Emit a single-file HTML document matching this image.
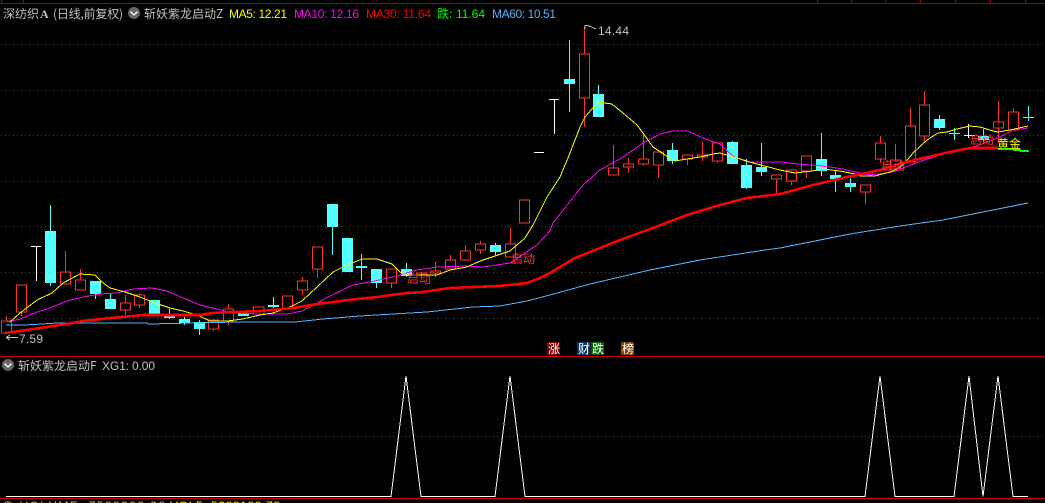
<!DOCTYPE html>
<html><head><meta charset="utf-8">
<style>
html,body{margin:0;padding:0;background:#000;width:1045px;height:503px;overflow:hidden}
svg{display:block}
text{font-family:"Liberation Sans","WenQuanYi Zen Hei","Noto Sans CJK SC",sans-serif;font-size:12px}
.c{font-family:"WenQuanYi Zen Hei","Noto Sans CJK SC",sans-serif}
</style></head><body>
<svg width="1045" height="503" viewBox="0 0 1045 503" xmlns="http://www.w3.org/2000/svg">
<rect width="1045" height="503" fill="#000"/>
<g shape-rendering="crispEdges">
<path d="M0 3.5H1045M1.5 0V3M23.5 0V3M817.5 0V3M851.5 0V3M885.5 0V3M920.5 0V3M955.5 0V3M990.5 0V3M1025.5 0V3" stroke="#a00000" fill="none"/>
<path d="M1 44.5H1045M1 90.5H1045M1 135.5H1045M1 181.5H1045M1 226.5H1045M1 272.5H1045M1 318.5H1045M1 436.5H1045" stroke="#c01414" stroke-dasharray="1 3" fill="none"/>
<path d="M0 356.5H1045M0 498.5H1045" stroke="#c80000" fill="none"/>

<!-- red candles -->
<path fill="none" stroke="#ff3232" d="
M6.5 316V321M1.5 321H11.5V333H1.5Z
M21.5 312V316M16.5 285H26.5V312H16.5Z
M65.5 251V272M60.5 272H70.5V284H60.5Z
M80.5 269V280M75.5 280H85.5V290H75.5Z
M125.5 295V303M125.5 310V315M120.5 303H130.5V310H120.5Z
M139.5 293V295M139.5 305V308M134.5 295H144.5V305H134.5Z
M213.5 329V331M208.5 320H218.5V329H208.5Z
M228.5 304V309M228.5 321V325M223.5 309H233.5V321H223.5Z
M264 307H253.5V314H264Z
M282.5 296H292.5V308H282.5Z
M302.5 277V281M302.5 290V295M297.5 281H307.5V290H297.5Z
M317.5 269V278M312.5 247H322.5V269H312.5Z
M391.5 283V288M386.5 269H396.5V283H386.5Z
M421.5 272V276M416.5 273H426.5V275H416.5Z
M435.5 262V271M435.5 273V277M430.5 271H440.5V273H430.5Z
M450.5 255V260M445.5 260H455.5V269H445.5Z
M465.5 245V251M465.5 260V261M460.5 251H470.5V260H460.5Z
M480.5 241V244M480.5 250V254M475.5 244H485.5V250H475.5Z
M510.5 228V244M505.5 244H515.5V257H505.5Z
M519.5 200H529.5V223H519.5Z
M584.5 27V54M584.5 98V127M579.5 54H589.5V98H579.5Z
M613.5 145V168M608.5 168H618.5V175H608.5Z
M628.5 158V164M628.5 167V173M623.5 164H633.5V167H623.5Z
M643.5 133V159M643.5 164V166M638.5 159H648.5V164H638.5Z
M658.5 165V178M653.5 152H663.5V165H653.5Z
M687.5 159V165M682.5 155H692.5V159H682.5Z
M702.5 142V155M702.5 157V161M697.5 155H707.5V157H697.5Z
M717.5 161V163M712.5 143H722.5V161H712.5Z
M776.5 179V194M771.5 175H781.5V179H771.5Z
M791.5 181V185M786.5 170H796.5V181H786.5Z
M806.5 171V178M801.5 156H811.5V171H801.5Z
M865.5 192V204M860.5 185H870.5V192H860.5Z
M880.5 136V143M880.5 159V163M875.5 143H885.5V159H875.5Z
M895.5 144V160M890.5 160H900.5V169H890.5Z
M910.5 108V126M905.5 126H915.5V162H905.5Z
M924.5 91V105M924.5 136V142M919.5 105H929.5V136H919.5Z
M998.5 101V122M998.5 128V143M993.5 122H1003.5V128H993.5Z
M1013.5 108V112M1008.5 112H1018.5V130H1008.5Z"/>

<!-- cyan candles -->
<path fill="none" stroke="#54ffff" d="M50.5 205V231M50.5 283V286M95.5 294V299M110.5 293V299M169.5 309V316M169.5 318V319M184.5 317V319M184.5 323V325M199.5 320V322M199.5 329V335M243.5 313V316M273.5 297V308M332.5 227V255M361.5 254V280M376.5 283V288M406.5 263V277M495.5 243V245M495.5 252V255M569.5 40V112M598.5 85V94M672.5 143V150M672.5 161V164M732.5 141V142M746.5 159V165M746.5 188V189M761.5 143V167M761.5 172V176M821.5 133V159M821.5 171V176M835.5 170V192M850.5 178V192M939.5 115V130M954.5 128V140M949 133.5H960M983.5 129V143M1028.5 106V121M1023 117.5H1034"/>
<g fill="#54ffff">
<rect x="45" y="231" width="11" height="52"/>
<rect x="90" y="281" width="11" height="13"/>
<rect x="105" y="299" width="11" height="10"/>
<rect x="149" y="300" width="11" height="14"/>
<rect x="164" y="316" width="11" height="2"/>
<rect x="179" y="319" width="11" height="4"/>
<rect x="194" y="322" width="11" height="7"/>
<rect x="238" y="313" width="11" height="3"/>
<rect x="268" y="305" width="11" height="2"/>
<rect x="327" y="204" width="11" height="23"/>
<rect x="342" y="238" width="11" height="34"/>
<rect x="356" y="266" width="11" height="2"/>
<rect x="371" y="269" width="11" height="14"/>
<rect x="401" y="269" width="11" height="7"/>
<rect x="490" y="245" width="11" height="7"/>
<rect x="564" y="79" width="11" height="5"/>
<rect x="593" y="94" width="11" height="23"/>
<rect x="667" y="150" width="11" height="11"/>
<rect x="727" y="142" width="11" height="22"/>
<rect x="741" y="165" width="11" height="23"/>
<rect x="756" y="167" width="11" height="5"/>
<rect x="816" y="159" width="11" height="12"/>
<rect x="830" y="175" width="11" height="4"/>
<rect x="845" y="183" width="11" height="4"/>
<rect x="934" y="119" width="11" height="9"/>
<rect x="978" y="136" width="11" height="4"/>
</g>

<!-- white marks -->
<path fill="none" stroke="#fff" d="M36.500 246V281M31 246.500H41M534 152.500H544M554.500 99V134M549 99.500H559M968.500 124V138M964 135.500H975"/>

<!-- MA60 -->
<polyline fill="none" stroke="#54b4ff" points="6,325 25,325 58,323 147,323 148,324 237,322 295,322 323,319 360,316 393,314 427,312 473,307 500,306 527,301 550,295 590,284 650,270 700,260 765,250 780,248 850,234 900,226 943,220 1028,203"/>
<!-- MA10 -->
<polyline fill="none" stroke="#ff00ff" points="7,322 20,319 37,312 50,308 67,301 83,297 100,294 117,293 133,289 152,288 167,291 183,298 200,305 217,309 233,313 260,314 288,314 302,311 317,303 332,295 353,285 370,282 393,277 417,270 437,267 467,266 483,267 510,263 525,253 537,245 550,231 553,223 583,185 600,170 620,159 643,143 660,134 673,131 688,131 703,138 720,144 733,156 747,162 780,162 798,164 823,166 843,169 860,173 870,175 893,172 903,168 927,159 950,152 967,148 977,146 1000,137 1013,130 1028,128"/>
<!-- MA5 -->
<polyline fill="none" stroke="#ffff00" points="10,322 20,313 37,300 52,293 63,283 80,274 95,275 102,282 110,288 125,292 140,297 155,303 170,308 183,311 197,315 210,321 227,321 243,319 260,315 273,313 290,307 302,301 317,287 333,272 347,265 362,259 377,259 392,264 400,272 407,275 423,275 437,275 450,270 467,267 480,261 495,256 510,251 525,238 533,225 547,197 560,177 570,153 580,127 585,117 598,102 612,104 623,113 637,125 643,133 653,147 665,155 675,161 687,159 700,157 713,154 720,153 737,158 753,163 780,170 795,173 812,171 823,169 840,171 855,174 860,176 875,176 890,172 895,170 903,165 913,153 927,140 938,133 947,132 957,129 970,126 980,127 993,131 998,132 1010,130 1028,126"/>
<!-- MA30 -->
<polyline fill="none" stroke="#ff0000" stroke-width="2.6" points="5,333 20,331 40,328 67,324 83,321 110,318 133,316 143,315 200,315 213,313 233,312 260,311 293,308 317,304 357,299 377,297 407,293 423,292 450,288 497,286 510,285 527,283 540,278 550,273 575,258 595,250 620,240 653,228 687,215 720,205 747,198 780,194 813,185 847,177 880,170 903,163 923,158 950,152 970,148 998,148"/>
<!-- green segment -->
<path fill="#00ff00" d="M998 148H1013V150H998ZM1013 149H1021V151H1013ZM1020 150H1029V152H1020Z"/>

<!-- lower panel -->
<polyline fill="none" stroke="#fff" points="6,496.500 391,496.500 406,376 421,496.500 495,496.500 510,376 525,496.500 865,496.500 880,376 895,496.500 954,496.500 969,376 983,496.500 998,376 1013,496.500 1028,496.500"/>

<!-- badges -->
<rect x="547" y="342" width="13" height="13" fill="#800000"/>
<rect x="577" y="342" width="13" height="13" fill="#0a3a70"/>
<rect x="591" y="342" width="13" height="13" fill="#006400"/>
<rect x="621" y="342" width="13" height="13" fill="#804000"/>
</g>

<!-- arrows -->
<path fill="none" stroke="#c0c0c0" shape-rendering="crispEdges" d="M6 337.500H18M6 337.500L10 335M6 337.500L10 340M585 25.500H588L596 29M585 25V29"/>

<!-- round chevrons -->
<circle cx="134" cy="13" r="6" fill="#666"/>
<path d="M130.500 11.500L134 15L137.500 11.500" fill="none" stroke="#fff" stroke-width="1.300"/>
<circle cx="8" cy="365" r="6" fill="#666"/>
<path d="M4.500 363.500L8 367L11.500 363.500" fill="none" stroke="#fff" stroke-width="1.300"/>
<circle cx="8" cy="507" r="6" fill="#666"/>

<!-- header -->
<text class="c" x="3" y="18" fill="#c0c0c0">深纺织</text>
<text x="40" y="18" fill="#c0c0c0" font-weight="bold" style="font-family:'Liberation Serif',serif">A</text>
<text class="c" x="53" y="18" fill="#c0c0c0" textLength="70">(日线,前复权)</text>
<text class="c" x="144" y="18" fill="#c0c0c0">斩妖紫龙启动Z</text>
<text x="229" y="18" fill="#ffff00" textLength="58">MA5: 12.21</text>
<text x="294" y="18" fill="#ff00ff" textLength="65">MA10: 12.16</text>
<text x="366" y="18" fill="#ff0000" textLength="65">MA30: 11.64</text>
<text class="c" x="437" y="18" fill="#00ff00">跌:</text>
<text x="456" y="18" fill="#00ff00" textLength="29">11.64</text>
<text x="492" y="18" fill="#54b4ff" textLength="64">MA60: 10.51</text>

<text x="598" y="35" fill="#c0c0c0" textLength="31">14.44</text>
<text x="19" y="343" fill="#c0c0c0" textLength="24">7.59</text>

<!-- chart labels -->
<text class="c" x="407" y="283" fill="#ff3030">启动</text>
<text class="c" x="511" y="263" fill="#ff3030">启动</text>
<text class="c" x="881" y="170" fill="#ff3030">启动</text>
<text class="c" x="970" y="144" fill="#ff3030">启动</text>
<text class="c" x="997" y="148" fill="#ffff00">黄金</text>

<!-- badge text -->
<text class="c" x="548" y="353" fill="#fff">涨</text>
<text class="c" x="578" y="353" fill="#fff">财</text>
<text class="c" x="592" y="353" fill="#fff">跌</text>
<text class="c" x="622" y="353" fill="#fff">榜</text>

<!-- lower panel header -->
<text class="c" x="18" y="370" fill="#c0c0c0">斩妖紫龙启动F</text>
<text x="102" y="370" fill="#c0c0c0" textLength="53">XG1: 0.00</text>

<!-- clipped bottom row -->
<text x="20" y="510" fill="#c0c0c0" textLength="145">VOLUME: 7588388.38</text>
<text x="170" y="510" fill="#ffff00" textLength="110">VOL5: 5388188.78</text>
</svg>
</body></html>
